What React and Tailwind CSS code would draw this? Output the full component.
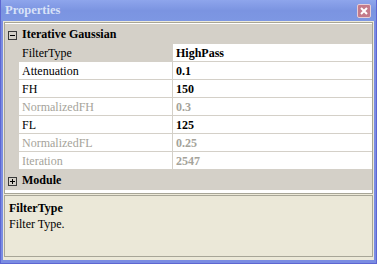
import React from "react";

const rows = [
  { name: "FilterType", value: "HighPass", selected: true },
  { name: "Attenuation", value: "0.1" },
  { name: "FH", value: "150" },
  { name: "NormalizedFH", value: "0.3", disabled: true },
  { name: "FL", value: "125" },
  { name: "NormalizedFL", value: "0.25", disabled: true },
  { name: "Iteration", value: "2547", disabled: true },
];

function ExpandBox({ open }) {
  return (
    <svg width="9" height="9" viewBox="0 0 9 9" className="mt-[2px]">
      <rect x="0.5" y="0.5" width="8" height="8" fill="none" stroke="#3a3a3a" />
      <line x1="2" y1="4.5" x2="7" y2="4.5" stroke="#000" />
      {!open && <line x1="4.5" y1="2" x2="4.5" y2="7" stroke="#000" />}
    </svg>
  );
}

function Category({ title, open }) {
  return (
    <div className="flex h-[20px] items-center bg-[#d4d0c8]">
      <div className="flex w-[14px] justify-center">
        <ExpandBox open={open} />
      </div>
      <span className="pl-[3px] font-bold">{title}</span>
    </div>
  );
}

function Row({ name, value, selected, disabled }) {
  const color = disabled ? "text-[#a5a39a]" : "text-black";
  return (
    <div className="flex h-[18px]">
      <div className="w-[14px] bg-[#d4d0c8]" />
      <div
        className={`flex w-[154px] items-center border-r border-b border-[#d4d0c8] pl-[3px] ${
          selected ? "bg-[#d4d0c8]" : "bg-white"
        } ${color}`}
      >
        {name}
      </div>
      <div className={`flex flex-1 items-center border-b border-[#d4d0c8] bg-white pl-[3px] font-bold ${color}`}>
        {value}
      </div>
    </div>
  );
}

export default function App() {
  return (
    <div className="flex h-[264px] w-[377px] flex-col border-x border-b border-[#5d66d2] bg-[#7a8ce2] text-[12px] leading-none [font-family:'Liberation_Serif','Times_New_Roman','DejaVu_Serif',serif]">
      {/* title bar */}
      <div className="flex h-[21px] items-center justify-between bg-gradient-to-b from-[#8ea5ec] via-[#7b94e1] to-[#7d97e3] pr-[5px] pl-[4px]">
        <span className="text-[12.5px] font-bold text-[#d8e2f8]">Properties</span>
        <div className="flex h-[14px] w-[14px] items-center justify-center rounded-[2px] border border-[#e6cdd6] bg-[#c47a8a]">
          <svg width="8" height="8" viewBox="0 0 8 8">
            <path d="M1 1L7 7M7 1L1 7" stroke="#fff" strokeWidth="2" />
          </svg>
        </div>
      </div>

      {/* body */}
      <div className="mx-[2px] mb-[3px] flex flex-1 flex-col gap-[1px] bg-[#ece9d8] px-[1px] pt-[1px] pb-[3px]">
        <div className="flex h-[172px] flex-col border border-[#a7a597] bg-white pt-[1px]">
          <Category title="Iterative Gaussian" open />
          {rows.map((r) => (
            <Row key={r.name} {...r} />
          ))}
          <Category title="Module" />
        </div>
        <div className="flex flex-1 flex-col gap-[4px] border border-[#a7a597] bg-[#ebe8d8] px-[4px] pt-[6px]">
          <span className="font-bold">FilterType</span>
          <span>Filter Type.</span>
        </div>
      </div>
    </div>
  );
}
